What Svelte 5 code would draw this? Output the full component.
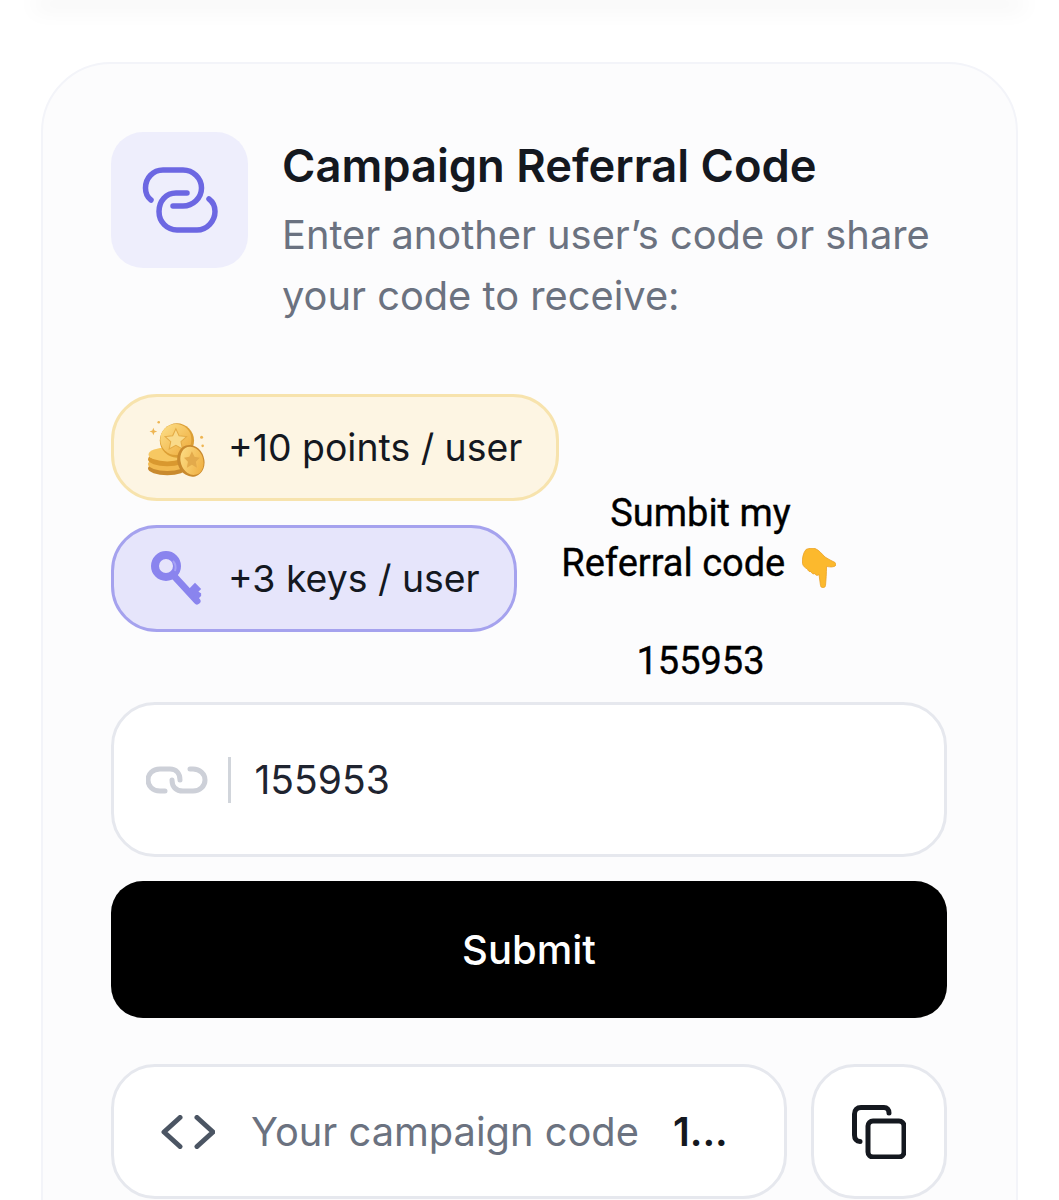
<script>
  const pills = [
    { cls: 'gold', text: '+10 points / user' },
    { cls: 'violet', text: '+3 keys / user' }
  ];
</script>

<div class="page">
  <div class="topbar"></div>
  <section class="card">
    <header class="head">
      <div class="iconbox">
        <svg width="137" height="136" viewBox="111 132 137 136" fill="none" stroke="#6c67e2" stroke-width="5.5" stroke-linecap="round" stroke-linejoin="round">
          <path d="M151 200C147 197 145.5 192 145.5 188C145.5 178 153 170 163 170H183C193 170 201.5 178 201.5 188C201.5 198 193 206 183 206H173" />
          <path d="M187 193H176C166 193 159 201 159 211.5C159 222 167 230 177 230H197C207 230 215 221 215 211.5C215 206 213 202 209 199" />
        </svg>
      </div>
      <div class="headtext">
        <h2>Campaign Referral Code</h2>
        <p>Enter another user’s code or share your code to receive:</p>
      </div>
    </header>

    <div class="pills">
      {#each pills as pill}
        <div class="pill {pill.cls}">
          {#if pill.cls === 'gold'}
            <svg class="picon" width="60" height="60" viewBox="3 0 56 56">
              <defs>
                <linearGradient id="cg" x1="0" y1="0" x2="1" y2="1">
                  <stop offset="0" stop-color="#fde08a" /><stop offset="1" stop-color="#eeaa3a" />
                </linearGradient>
              </defs>
              <g fill="#eeb552"><path d="M8 9l1 2.6 2.6 1-2.6 1-1 2.6-1-2.600-2.600-1 2.600-1z" /><circle cx="13" cy="4" r="1.200" /><circle cx="53" cy="18" r="1.400" /><circle cx="54" cy="26" r="1.200" /></g>
              <ellipse cx="21" cy="47" rx="18" ry="6.500" fill="#c98a2e" />
              <ellipse cx="21" cy="43" rx="18" ry="6.500" fill="#f2b94f" />
              <ellipse cx="21" cy="38.500" rx="18" ry="6.500" fill="#d9982f" />
              <ellipse cx="21" cy="34" rx="17.500" ry="6.500" fill="#f7c862" />
              <circle cx="30" cy="21" r="16" fill="#dc9f34" />
              <circle cx="29" cy="20" r="14.500" fill="url(#cg)" />
              <path d="M29 10l3 6.500 7 .8-5.200 4.700 1.400 7-6.200-3.500-6.200 3.500 1.400-7-5.200-4.700 7-.8z" fill="#f9da8a" stroke="#e4ab45" stroke-width="1" />
              <ellipse cx="43" cy="40" rx="12.500" ry="15" transform="rotate(-18 43 40)" fill="#c98a2e" />
              <ellipse cx="44" cy="40" rx="10.500" ry="13.500" transform="rotate(-18 44 40)" fill="url(#cg)" />
              <path d="M44 31l2.400 5.200 5 .8-3.700 3.800 1 5.600-4.700-2.700-4.700 2.700 1-5.600-3.700-3.800 5-.8z" fill="#e3aa4b" />
            </svg>
          {:else}
            <svg class="picon" width="60" height="60" viewBox="0 0 60 60">
              <path d="M26 27L49 52" stroke="#8a84ee" stroke-width="7" stroke-linecap="round" fill="none" />
              <path d="M41 43l6-6 3 3-3 3 3 2-2.500 3M47 50l4-4" stroke="#8a84ee" stroke-width="4.500" stroke-linecap="round" fill="none" />
              <circle cx="18" cy="17" r="11" fill="#e6e4fb" stroke="#8a84ee" stroke-width="8" />
              <path d="M25 12a10 10 0 0 1 2 10" stroke="#a6a1f5" stroke-width="2" fill="none" />
            </svg>
          {/if}
          <span>{pill.text}</span>
        </div>
      {/each}
    </div>

    <div class="note">
      <p>Sumbit my<br /><span class="ref">Referral code
        <svg class="hand" role="img" aria-label="pointing down" width="34" height="40" viewBox="0 0 34 40">
          <path d="M4 1.500C7 0 11 0 13 .5C17 2 20 6 23 9C26 11 30 13 33 14.500C34.500 16 34 18 32 18.500C29 19.500 26 18.500 24.500 18.500C24.500 25 24 32 23.500 37.500C23 40.500 19 40.500 18.500 37.500L17 26.500C15.500 28 13.500 27.500 13 25.500C11.500 26.500 9.500 25.500 9 23.500C7.500 24 6 23 5.500 21C3 20 1 18 .5 15.500C0 11 1 5 4 1.500Z" fill="#fcb92d" stroke="#eaa124" stroke-width=".8" />
        </svg></span>
      </p>
      <p class="num">155953</p>
    </div>

    <label class="input">
      <svg width="62" height="28" viewBox="146 766 62 28" fill="none" stroke="#cdd0d8" stroke-width="5" stroke-linecap="round">
        <path d="M165 791H160C152.500 791 148 786 148 780C148 774 152.500 769 160 769H170C176 769 180 773 180 780" />
        <path d="M172 780C172 787 176 791 183 791H193C200 791 205 786 205 780C205 774 200 769 193 769H190" />
      </svg>
      <span class="sep"></span>
      <span class="value">155953</span>
    </label>

    <button class="submit">Submit</button>

    <div class="coderow">
      <div class="codebox">
        <svg width="54" height="34" viewBox="161 1115 54 34" fill="none" stroke="#4b5563" stroke-width="5" stroke-linecap="round" stroke-linejoin="round">
          <path d="M180 1117.500L164 1132L180 1146.500" />
          <path d="M197 1117.500L213 1132L197 1146.500" />
        </svg>
        <span class="codelabel">Your campaign code</span>
        <strong>1...</strong>
      </div>
      <button class="copy" aria-label="Copy">
        <svg width="54" height="54" viewBox="853 1105 54 54" fill="none" stroke="#14181f" stroke-width="5" stroke-linecap="round" stroke-linejoin="round">
          <rect x="869" y="1121" width="36" height="36" rx="5" />
          <path d="M890 1113C890 1109.500 888 1107.500 885 1107.500H862C858 1107.500 855.500 1110 855.500 1114V1135C855.500 1139 857.500 1141.500 861 1141.500" />
        </svg>
      </button>
    </div>
  </section>
</div>

<style>
  :global(body) { background: #fff; }
  .page {
    height: 1200px;
    overflow: hidden;
    font-family: Inter, "Liberation Sans", sans-serif;
    background: #fff;
    position: relative;
  }
  .topbar {
    height: 0;
    margin: 0 40px;
    box-shadow: 0 4px 22px 6px rgba(20, 24, 40, 0.05);
  }
  .card {
    position: relative;
    margin: 62px 41px 0 41px;
    padding: 68px 69px 80px 68px;
    border: 2px solid #f3f4f9;
    border-radius: 70px;
    background: #fcfcfd;
    display: flex;
    flex-direction: column;
  }
  .head { display: flex; gap: 35px; align-items: flex-start; }
  .iconbox {
    width: 137px;
    height: 136px;
    flex: none;
    border-radius: 32px;
    background: #eeeefc;
  }
  .iconbox svg { display: block; }
  .headtext { padding-top: 6px; margin-left: -1px; }
  h2 {
    margin: 0;
    font-size: 45.3px;
    line-height: 56px;
    font-weight: 600;
    color: #14181f;
    letter-spacing: 0;
  }
  .headtext p {
    margin: 10px 0 0;
    font-size: 39.8px;
    line-height: 61px;
    color: #6b7280;
    font-weight: 400;
    max-width: 680px;
  }
  .pills {
    display: flex;
    flex-direction: column;
    align-items: flex-start;
    gap: 24px;
    margin-top: 68px;
  }
  .pill {
    height: 107px;
    box-sizing: border-box;
    display: flex;
    align-items: center;
    gap: 20px;
    padding: 0 34px 0 34px;
    border-radius: 46px;
    font-size: 37.4px;
    color: #14181f;
    font-weight: 400;
  }
  .picon { flex: none; }
  .gold { background: #fdf5e3; border: 3px solid #f7e3ad; }
  .violet { background: #e6e5fb; border: 3px solid #a5a2ee; }
  .note {
    position: absolute;
    left: 514.5px;
    top: 424px;
    width: 286px;
    text-align: center;
    font-family: Roboto, sans-serif;
    font-weight: 400;
    font-size: 38px;
    line-height: 50px;
    color: #000;
    -webkit-text-stroke: 0.35px #000;
  }
  .note p { margin: 0; }
  .note .ref { white-space: nowrap; }
  .note .num { margin-top: 48px; }
  .hand { vertical-align: -12px; margin-left: 7px; margin-right: 4px; }
  .input {
    margin-top: 70px;
    height: 155px;
    box-sizing: border-box;
    display: flex;
    align-items: center;
    padding: 0 32px;
    border: 3px solid #e6e8ee;
    border-radius: 44px;
    background: #fff;
    font-size: 39px;
    color: #1f2430;
  }
  .sep { width: 2.500px; height: 46px; background: #d1d5db; margin: 0 24px 0 20px; }
  .submit {
    margin-top: 24px;
    height: 137px;
    border: 0;
    border-radius: 32px;
    background: #000;
    color: #fff;
    font-family: inherit;
    font-size: 40px;
    font-weight: 500;
  }
  .coderow { display: flex; gap: 24px; margin-top: 46px; }
  .codebox {
    flex: 1;
    height: 135px;
    box-sizing: border-box;
    display: flex;
    align-items: center;
    padding: 0 47px;
    border: 3px solid #e6e8ee;
    border-radius: 44px;
    background: #fff;
    font-size: 39.8px;
  }
  .codelabel { color: #6b7280; margin-left: 36px; white-space: nowrap; }
  .codebox strong { margin-left: 34px; color: #14181f; font-weight: 600; }
  .copy {
    width: 136px;
    height: 135px;
    flex: none;
    padding: 0;
    border: 3px solid #e6e8ee;
    border-radius: 44px;
    background: #fff;
    display: flex;
    align-items: center;
    justify-content: center;
  }
</style>
